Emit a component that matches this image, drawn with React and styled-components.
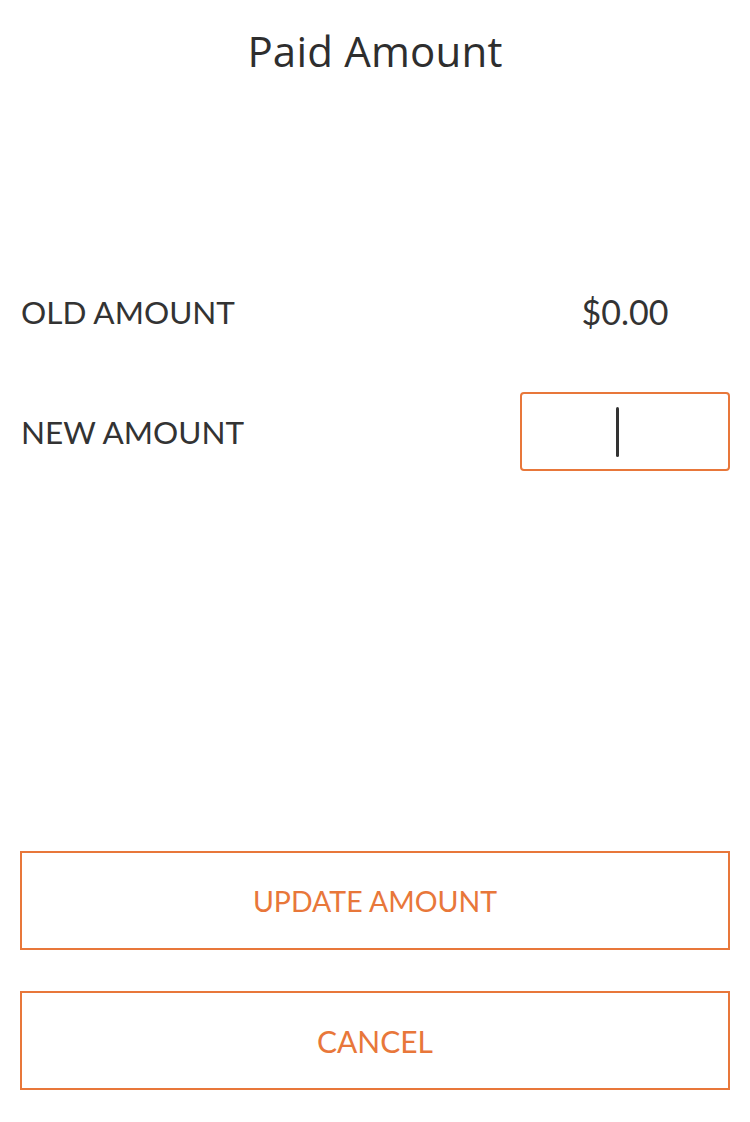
import React from "react";
import styled, { createGlobalStyle } from "styled-components";

const Global = createGlobalStyle`
  html, body { margin: 0; padding: 0; background: #fff; }
  body { font-family: "Lato", "Noto Sans", sans-serif; color: #333; }
  * { box-sizing: border-box; }
`;

const ORANGE = "#e8773a";

const Page = styled.div`
  height: 1122px;
  display: flex;
  flex-direction: column;
  padding: 0 20px 32px;
`;

const Title = styled.h1`
  margin: 0;
  height: 100px;
  display: flex;
  align-items: center;
  justify-content: center;
  font-family: "Open Sans", "Lato", sans-serif;
  font-weight: 400;
  font-size: 42px;
  color: #2e2e2e;
  letter-spacing: 0.2px;
`;

const Rows = styled.div`
  margin-top: 172px;
  display: flex;
  flex-direction: column;
  gap: 41px;
`;

const Row = styled.div`
  display: flex;
  align-items: center;
  justify-content: space-between;
  height: 79px;
`;

const Label = styled.span`
  font-size: 31.5px;
  color: #333;
  padding-left: 1px;
`;

const Value = styled.div`
  width: 210px;
  text-align: center;
  font-size: 34px;
  color: #333;
`;

const InputBox = styled.div`
  width: 210px;
  height: 79px;
  border: 2px solid ${ORANGE};
  border-radius: 4px;
  display: flex;
  align-items: center;
  justify-content: center;
  padding-right: 16px;
`;

const Caret = styled.span`
  width: 3px;
  height: 50px;
  border-radius: 2px;
  background: #333;
`;

const Spacer = styled.div`
  flex: 1;
`;

const Actions = styled.div`
  display: flex;
  flex-direction: column;
  gap: 41px;
`;

const ActionButton = styled.button`
  width: 100%;
  height: 99px;
  background: #fff;
  border: 2px solid ${ORANGE};
  border-radius: 0;
  color: ${ORANGE};
  font-family: "Lato", sans-serif;
  font-size: ${(p) => (p.$compact ? "28.5px" : "30px")};
  cursor: pointer;
`;

export default function App() {
  return (
    <>
      <Global />
      <Page>
        <Title>Paid Amount</Title>
        <Rows>
          <Row>
            <Label>OLD AMOUNT</Label>
            <Value>$0.00</Value>
          </Row>
          <Row>
            <Label>NEW AMOUNT</Label>
            <InputBox>
              <Caret />
            </InputBox>
          </Row>
        </Rows>
        <Spacer />
        <Actions>
          <ActionButton $compact>UPDATE AMOUNT</ActionButton>
          <ActionButton>CANCEL</ActionButton>
        </Actions>
      </Page>
    </>
  );
}
